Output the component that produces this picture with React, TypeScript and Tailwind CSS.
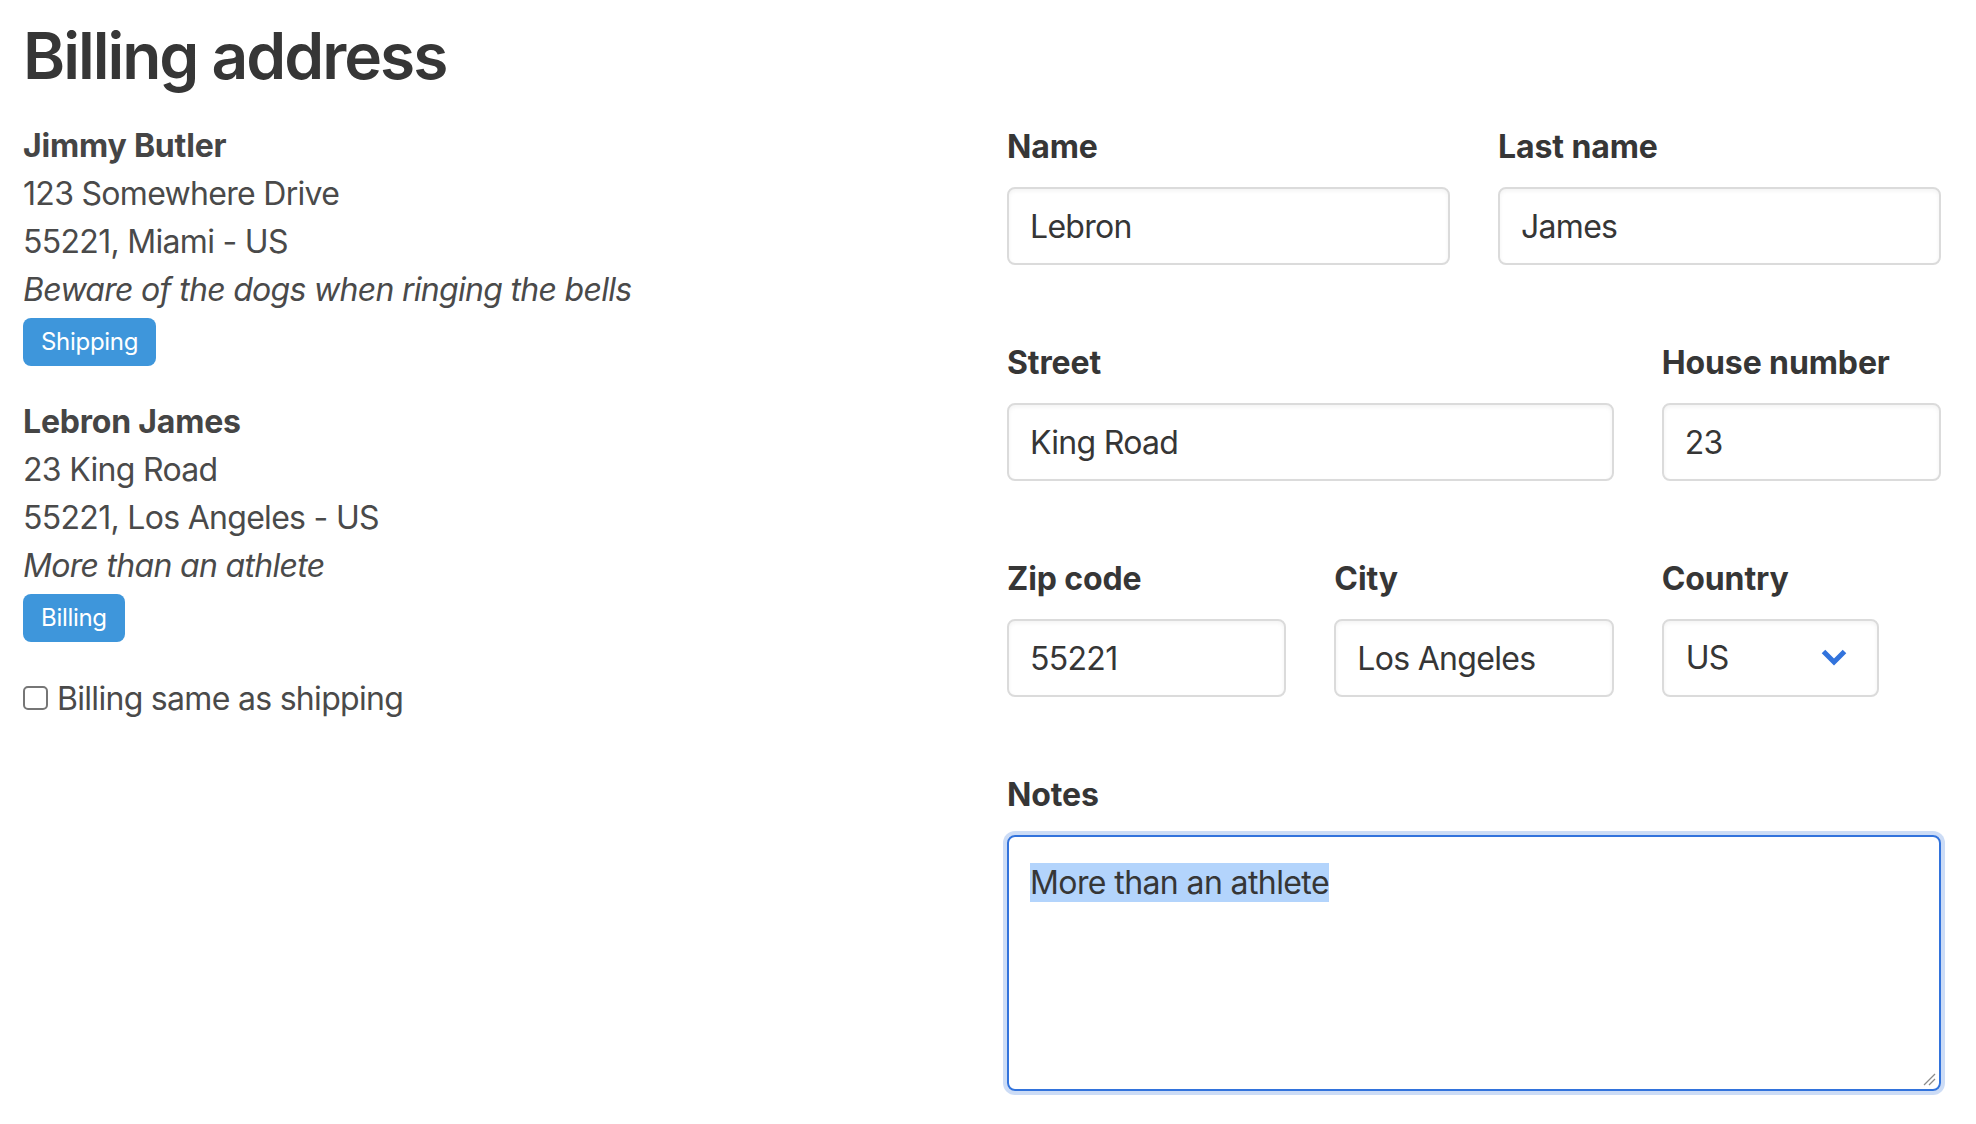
import React from 'react';

const font = "font-['Inter','Noto_Sans',sans-serif]";

const Tag = ({ children }: { children: React.ReactNode }) => (
    <span className="inline-flex items-center h-[48px] px-[18px] rounded-[8px] bg-[#3e96db] text-white text-[24px] leading-none tracking-[-0.3px]">
        {children}
    </span>
);

const Address = ({ name, street, city, note, tag }: { name: string; street: string; city: string; note: string; tag: string }) => (
    <div>
        <p className="font-bold text-[#454545] tracking-[-0.2px]">{name}</p>
        <p>{street}</p>
        <p>{city}</p>
        <p className="italic">{note}</p>
        <div className="mt-1 flex">
            <Tag>{tag}</Tag>
        </div>
    </div>
);

const Field = ({ label, span, children }: { label: string; span: string; children: React.ReactNode }) => (
    <div className={span}>
        <label className="block h-[48px] leading-[48px] text-[32px] font-bold text-[#363636] tracking-[-0.1px] mb-4">{label}</label>
        {children}
    </div>
);

const inputCls =
    'w-full h-[78px] border-2 border-[#dbdbdb] rounded-[8px] px-[21px] text-[32px] tracking-[-0.7px] text-[#363636] bg-white outline-none shadow-[inset_0_2px_4px_rgba(10,10,10,0.05)]';

export default function App() {
    return (
        <div className={`min-h-screen bg-white pl-[23px] pt-5 text-[#4a4a4a] ${font}`}>
            <h1 className="text-[64px] leading-[72px] font-semibold text-[#363636] tracking-[-2px]">Billing address</h1>

            <div className="flex mt-[30px]">
                {/* left: saved addresses */}
                <div className="w-[984px] text-[32px] leading-[48px] tracking-[-0.7px]">
                    <Address
                        name="Jimmy Butler"
                        street="123 Somewhere Drive"
                        city="55221, Miami - US"
                        note="Beware of the dogs when ringing the bells"
                        tag="Shipping"
                    />
                    <div className="mt-8">
                        <Address
                            name="Lebron James"
                            street="23 King Road"
                            city="55221, Los Angeles - US"
                            note="More than an athlete"
                            tag="Billing"
                        />
                    </div>
                    <label className="mt-[33px] flex items-center">
                        <span className="w-[25px] h-[24px] border-2 border-[#767676] rounded-[5px] bg-white mr-[9px] -mt-[3px]"></span>
                        <span>Billing same as shipping</span>
                    </label>
                </div>

                {/* right: form */}
                <div className="w-[934px] pt-px grid grid-cols-6 gap-x-12 gap-y-[74px]">
                    <Field label="Name" span="col-span-3">
                        <input className={inputCls} defaultValue="Lebron" readOnly />
                    </Field>
                    <Field label="Last name" span="col-span-3">
                        <input className={inputCls} defaultValue="James" readOnly />
                    </Field>

                    <Field label="Street" span="col-span-4">
                        <input className={inputCls} defaultValue="King Road" readOnly />
                    </Field>
                    <Field label="House number" span="col-span-2">
                        <input className={inputCls} defaultValue="23" readOnly />
                    </Field>

                    <Field label="Zip code" span="col-span-2">
                        <input className={inputCls} defaultValue="55221" readOnly />
                    </Field>
                    <Field label="City" span="col-span-2">
                        <input className={inputCls} defaultValue="Los Angeles" readOnly />
                    </Field>
                    <Field label="Country" span="col-span-2">
                        <div className="w-[217px] h-[78px] border-2 border-[#dbdbdb] rounded-[8px] pl-[22px] pr-[30px] flex items-center justify-between text-[32px] tracking-[-0.7px] text-[#363636] shadow-[inset_0_2px_4px_rgba(10,10,10,0.05)]">
                            <span>US</span>
                            <svg width="26" height="18" viewBox="0 0 26 18" fill="none">
                                <polyline points="2.5,2.5 13,13 23.5,2.5" stroke="#3273dc" strokeWidth="5" />
                            </svg>
                        </div>
                    </Field>

                    <Field label="Notes" span="col-span-6">
                        <div className="relative h-[256px] border-2 border-[#3273dc] rounded-[8px] px-[21px] pt-[22px] text-[32px] leading-[48px] tracking-[-0.6px] text-[#363636] shadow-[0_0_0_4px_rgba(50,115,220,0.25)]">
                            <span className="bg-[#b3d4fc]">More than an athlete</span>
                            <svg className="absolute right-[3px] bottom-[3px]" width="14" height="14" viewBox="0 0 14 14">
                                <line x1="13" y1="2" x2="2" y2="13" stroke="#8a8a8a" strokeWidth="1.2" />
                                <line x1="13" y1="7" x2="7" y2="13" stroke="#8a8a8a" strokeWidth="1.2" />
                            </svg>
                        </div>
                    </Field>
                </div>
            </div>
        </div>
    );
}
